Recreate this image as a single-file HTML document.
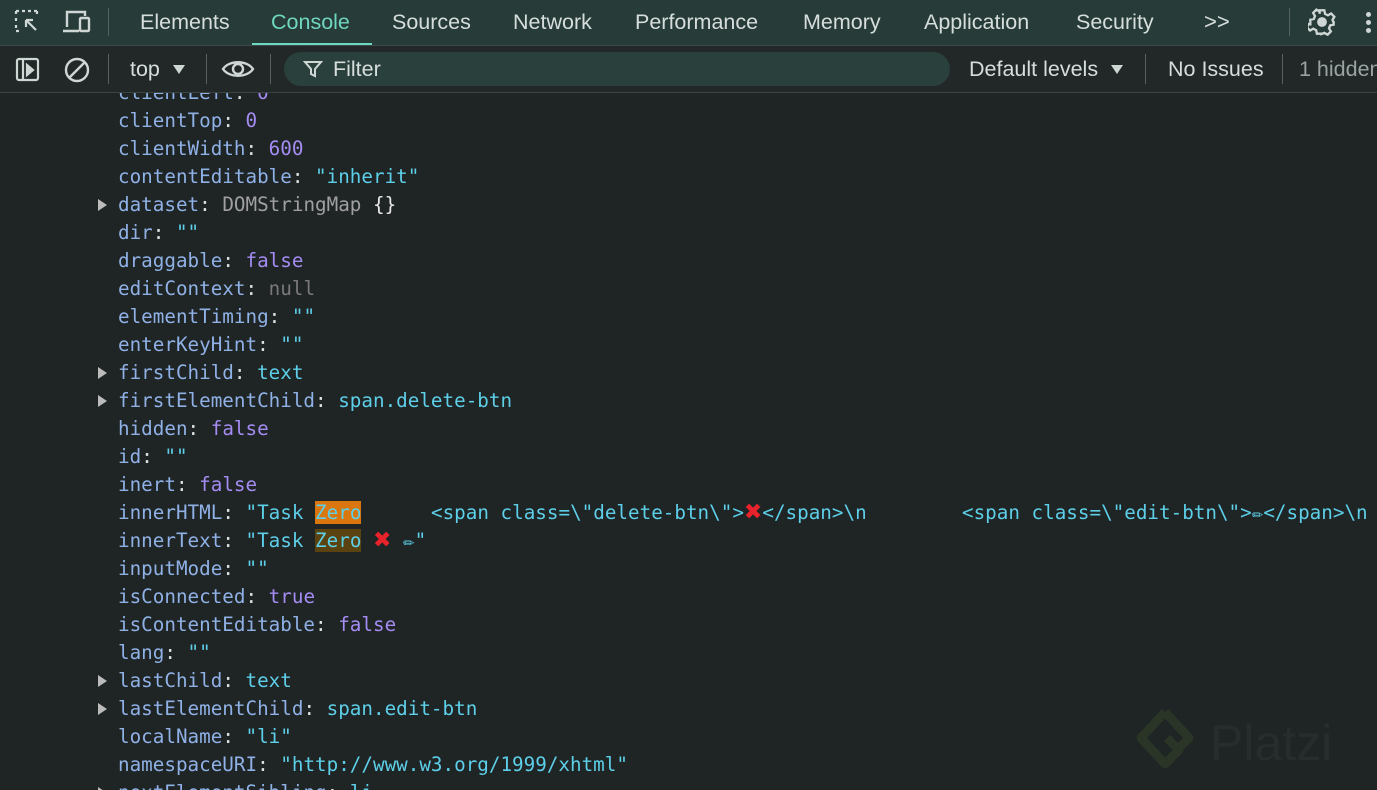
<!DOCTYPE html>
<html><head><meta charset="utf-8"><style>
body{margin:0;width:1377px;height:790px;overflow:hidden;background:#1f2425;font-family:"Liberation Sans",sans-serif;position:relative}
.top{position:absolute;left:0;top:0;width:1377px;height:45px;background:#273b38;border-bottom:1px solid #3c4a48}
.tab{position:absolute;top:10px;font-size:21.5px;color:#d6dedc;white-space:nowrap}
.bar{position:absolute;left:0;top:46px;width:1377px;height:46px;background:#212827;border-bottom:1px solid #3c4442;overflow:hidden}
.t2{position:absolute;top:57px;font-size:21.5px;color:#d6dedc;white-space:nowrap}
.sep{position:absolute;width:1px;background:#56625f}
.l{position:absolute;left:118px;font-family:"DejaVu Sans Mono","Liberation Mono",monospace;font-size:19.25px;white-space:pre;color:#8fb1e6;line-height:28px;margin-top:1px}
.c{color:#e0e0e0}.s{color:#5dcfe8}.n{color:#a48cf2}.g{color:#7a7a7a}.o{color:#a0a0a0}.w{color:#e8e8e8}
.tri{position:absolute;left:98px;width:0;height:0;border-top:6px solid transparent;border-bottom:6px solid transparent;border-left:9px solid #bbb;margin-top:1px}
.x{color:#e8232b;font-weight:bold;font-family:"DejaVu Sans",sans-serif;font-size:22px;line-height:20px}
</style></head><body>
<div class="top">
<svg style="position:absolute;left:14px;top:9px" width="28" height="26" viewBox="0 0 28 26" fill="none" stroke="#cfd7d5" stroke-width="2.2"><path d="M2 2h3M8 2h3M14 2h3M20 2h3M2 2v3M2 9v3M2 16v3M2 22h3M23 2v3M23 9v0"/><path d="M12 11l10 10M12 11h7M12 11v7" /></svg>
<svg style="position:absolute;left:62px;top:9px" width="30" height="26" viewBox="0 0 30 26" fill="none" stroke="#cfd7d5" stroke-width="2.4"><path d="M5 18V3h18v4M1 22h16"/><rect x="18" y="9" width="9" height="13" rx="1"/></svg>
<div class="sep" style="left:108px;top:8px;height:28px"></div>
<span class="tab" style="left:140px">Elements</span>
<span class="tab" style="left:271px;color:#6fd6c0">Console</span>
<div style="position:absolute;left:252px;top:43px;width:120px;height:2px;background:#6fd6c0"></div>
<span class="tab" style="left:392px">Sources</span>
<span class="tab" style="left:513px">Network</span>
<span class="tab" style="left:635px">Performance</span>
<span class="tab" style="left:803px">Memory</span>
<span class="tab" style="left:924px">Application</span>
<span class="tab" style="left:1076px">Security</span>
<span class="tab" style="left:1204px;font-size:22px;top:9px">&gt;&gt;</span>
<div class="sep" style="left:1289px;top:8px;height:28px"></div>
<svg style="position:absolute;left:1308px;top:8px" width="28" height="28" viewBox="0 0 24 24" fill="none" stroke="#cfd7d5" stroke-width="2"><circle cx="12" cy="12" r="3.2" fill="#cfd7d5"/><path d="M10 2h4l.6 3 2.5 1.3 2.7-1.6 2.8 2.8-1.6 2.7L22 12.7v-1.4 3l-3 .6-1 2.5 1.6 2.7-2.8 2.8-2.7-1.6-2.5 1V22h-4l-.6-3-2.5-1.3-2.7 1.6-2.8-2.8 1.6-2.7L2 14v-4l3-.6 1-2.5-1.6-2.7 2.8-2.8 2.7 1.6L10 5z"/></svg>
<div style="position:absolute;left:1366px;top:12px;width:5px;height:5px;border-radius:50%;background:#cfd7d5;box-shadow:0 8px 0 #cfd7d5,0 16px 0 #cfd7d5"></div>
</div>
<div class="bar">
<svg style="position:absolute;left:15px;top:11px" width="26" height="26" viewBox="0 0 26 26" fill="none" stroke="#cfd7d5" stroke-width="2.2"><rect x="2" y="2" width="21" height="21" rx="2"/><path d="M8 2v21"/><path d="M12 8l6 5-6 5z" fill="#cfd7d5"/></svg>
<svg style="position:absolute;left:63px;top:10px" width="28" height="28" viewBox="0 0 28 28" fill="none" stroke="#cfd7d5" stroke-width="2.4"><circle cx="14" cy="14" r="11"/><path d="M6 22L22 6"/></svg>
<div class="sep" style="left:108px;top:8px;height:30px"></div>
<span class="t2" style="left:130px;top:11px">top</span>
<div style="position:absolute;left:173px;top:19px;border-left:6px solid transparent;border-right:6px solid transparent;border-top:9px solid #cfd7d5"></div>
<div class="sep" style="left:206px;top:8px;height:30px"></div>
<svg style="position:absolute;left:221px;top:11px" width="34" height="24" viewBox="0 0 34 24" fill="none" stroke="#cfd7d5" stroke-width="2.4"><path d="M2 12C8 3 26 3 32 12C26 21 8 21 2 12z"/><circle cx="17" cy="12" r="5"/></svg>
<div class="sep" style="left:270px;top:8px;height:30px"></div>
<div style="position:absolute;left:284px;top:6px;width:666px;height:34px;border-radius:17px;background:#2a403c"></div>
<svg style="position:absolute;left:303px;top:13px" width="20" height="20" viewBox="0 0 20 20" fill="none" stroke="#cfd7d5" stroke-width="2"><path d="M2 3h16l-6 7v7l-4-2v-5z"/></svg>
<span class="t2" style="left:333px;top:11px">Filter</span>
<span class="t2" style="left:969px;top:11px">Default levels</span>
<div style="position:absolute;left:1111px;top:19px;border-left:6px solid transparent;border-right:6px solid transparent;border-top:9px solid #cfd7d5"></div>
<div class="sep" style="left:1145px;top:8px;height:30px"></div>
<span class="t2" style="left:1168px;top:11px">No Issues</span>
<div class="sep" style="left:1282px;top:8px;height:30px"></div>
<span class="t2" style="left:1299px;top:11px;color:#9aa3a1">1 hidden</span>
</div>
<div style="position:absolute;left:0;top:93px;width:1377px;height:697px;overflow:hidden">
<div style="position:absolute;left:0;top:-93px;width:1377px;height:790px">
<div class="l" style="top:78px">clientLeft<span class="c">: </span><span class="n">0</span></div>
<div class="l" style="top:106px">clientTop<span class="c">: </span><span class="n">0</span></div>
<div class="l" style="top:134px">clientWidth<span class="c">: </span><span class="n">600</span></div>
<div class="l" style="top:162px">contentEditable<span class="c">: </span><span class="s">"inherit"</span></div>
<div class="tri" style="top:198px"></div><div class="l" style="top:190px">dataset<span class="c">: </span><span class="o">DOMStringMap </span><span class="w">{}</span></div>
<div class="l" style="top:218px">dir<span class="c">: </span><span class="s">""</span></div>
<div class="l" style="top:246px">draggable<span class="c">: </span><span class="n">false</span></div>
<div class="l" style="top:274px">editContext<span class="c">: </span><span class="g">null</span></div>
<div class="l" style="top:302px">elementTiming<span class="c">: </span><span class="s">""</span></div>
<div class="l" style="top:330px">enterKeyHint<span class="c">: </span><span class="s">""</span></div>
<div class="tri" style="top:366px"></div><div class="l" style="top:358px">firstChild<span class="c">: </span><span class="s">text</span></div>
<div class="tri" style="top:394px"></div><div class="l" style="top:386px">firstElementChild<span class="c">: </span><span class="s">span.delete-btn</span></div>
<div class="l" style="top:414px">hidden<span class="c">: </span><span class="n">false</span></div>
<div class="l" style="top:442px">id<span class="c">: </span><span class="s">""</span></div>
<div class="l" style="top:470px">inert<span class="c">: </span><span class="n">false</span></div>
<div class="l" style="top:498px">innerHTML<span class="c">: </span><span class="s">"Task <span style="background:#d9770e">Zero</span></span></div>
<div class="l s" style="top:498px;left:431px">&lt;span class=\"delete-btn\"&gt;<span class="x">✖</span>&lt;/span&gt;\n</div>
<div class="l s" style="top:498px;left:962px">&lt;span class=\"edit-btn\"&gt;✏&lt;/span&gt;\n</div>
<div class="l" style="top:526px">innerText<span class="c">: </span><span class="s">"Task <span style="background:#5a4310">Zero</span> <span class="x">✖</span> ✏"</span></div>
<div class="l" style="top:554px">inputMode<span class="c">: </span><span class="s">""</span></div>
<div class="l" style="top:582px">isConnected<span class="c">: </span><span class="n">true</span></div>
<div class="l" style="top:610px">isContentEditable<span class="c">: </span><span class="n">false</span></div>
<div class="l" style="top:638px">lang<span class="c">: </span><span class="s">""</span></div>
<div class="tri" style="top:674px"></div><div class="l" style="top:666px">lastChild<span class="c">: </span><span class="s">text</span></div>
<div class="tri" style="top:702px"></div><div class="l" style="top:694px">lastElementChild<span class="c">: </span><span class="s">span.edit-btn</span></div>
<div class="l" style="top:722px">localName<span class="c">: </span><span class="s">"li"</span></div>
<div class="l" style="top:750px">namespaceURI<span class="c">: </span><span class="s">"http://www.w3.org/1999/xhtml"</span></div>
<div class="tri" style="top:786px"></div><div class="l" style="top:778px">nextElementSibling<span class="c">: </span><span class="s">li</span></div>
</div></div>
<svg style="position:absolute;left:1133px;top:704px" width="64" height="80" viewBox="0 0 64 80" fill="none" stroke="#2b3527" stroke-width="9" stroke-linejoin="round"><path d="M32 8L8 34l24 26 14-14-12-12"/><path d="M32 8l24 26-10 10"/></svg>
<span style="position:absolute;left:1210px;top:714px;font-size:50px;color:#272c2d;font-family:'Liberation Sans',sans-serif">Platzi</span>
</body></html>
